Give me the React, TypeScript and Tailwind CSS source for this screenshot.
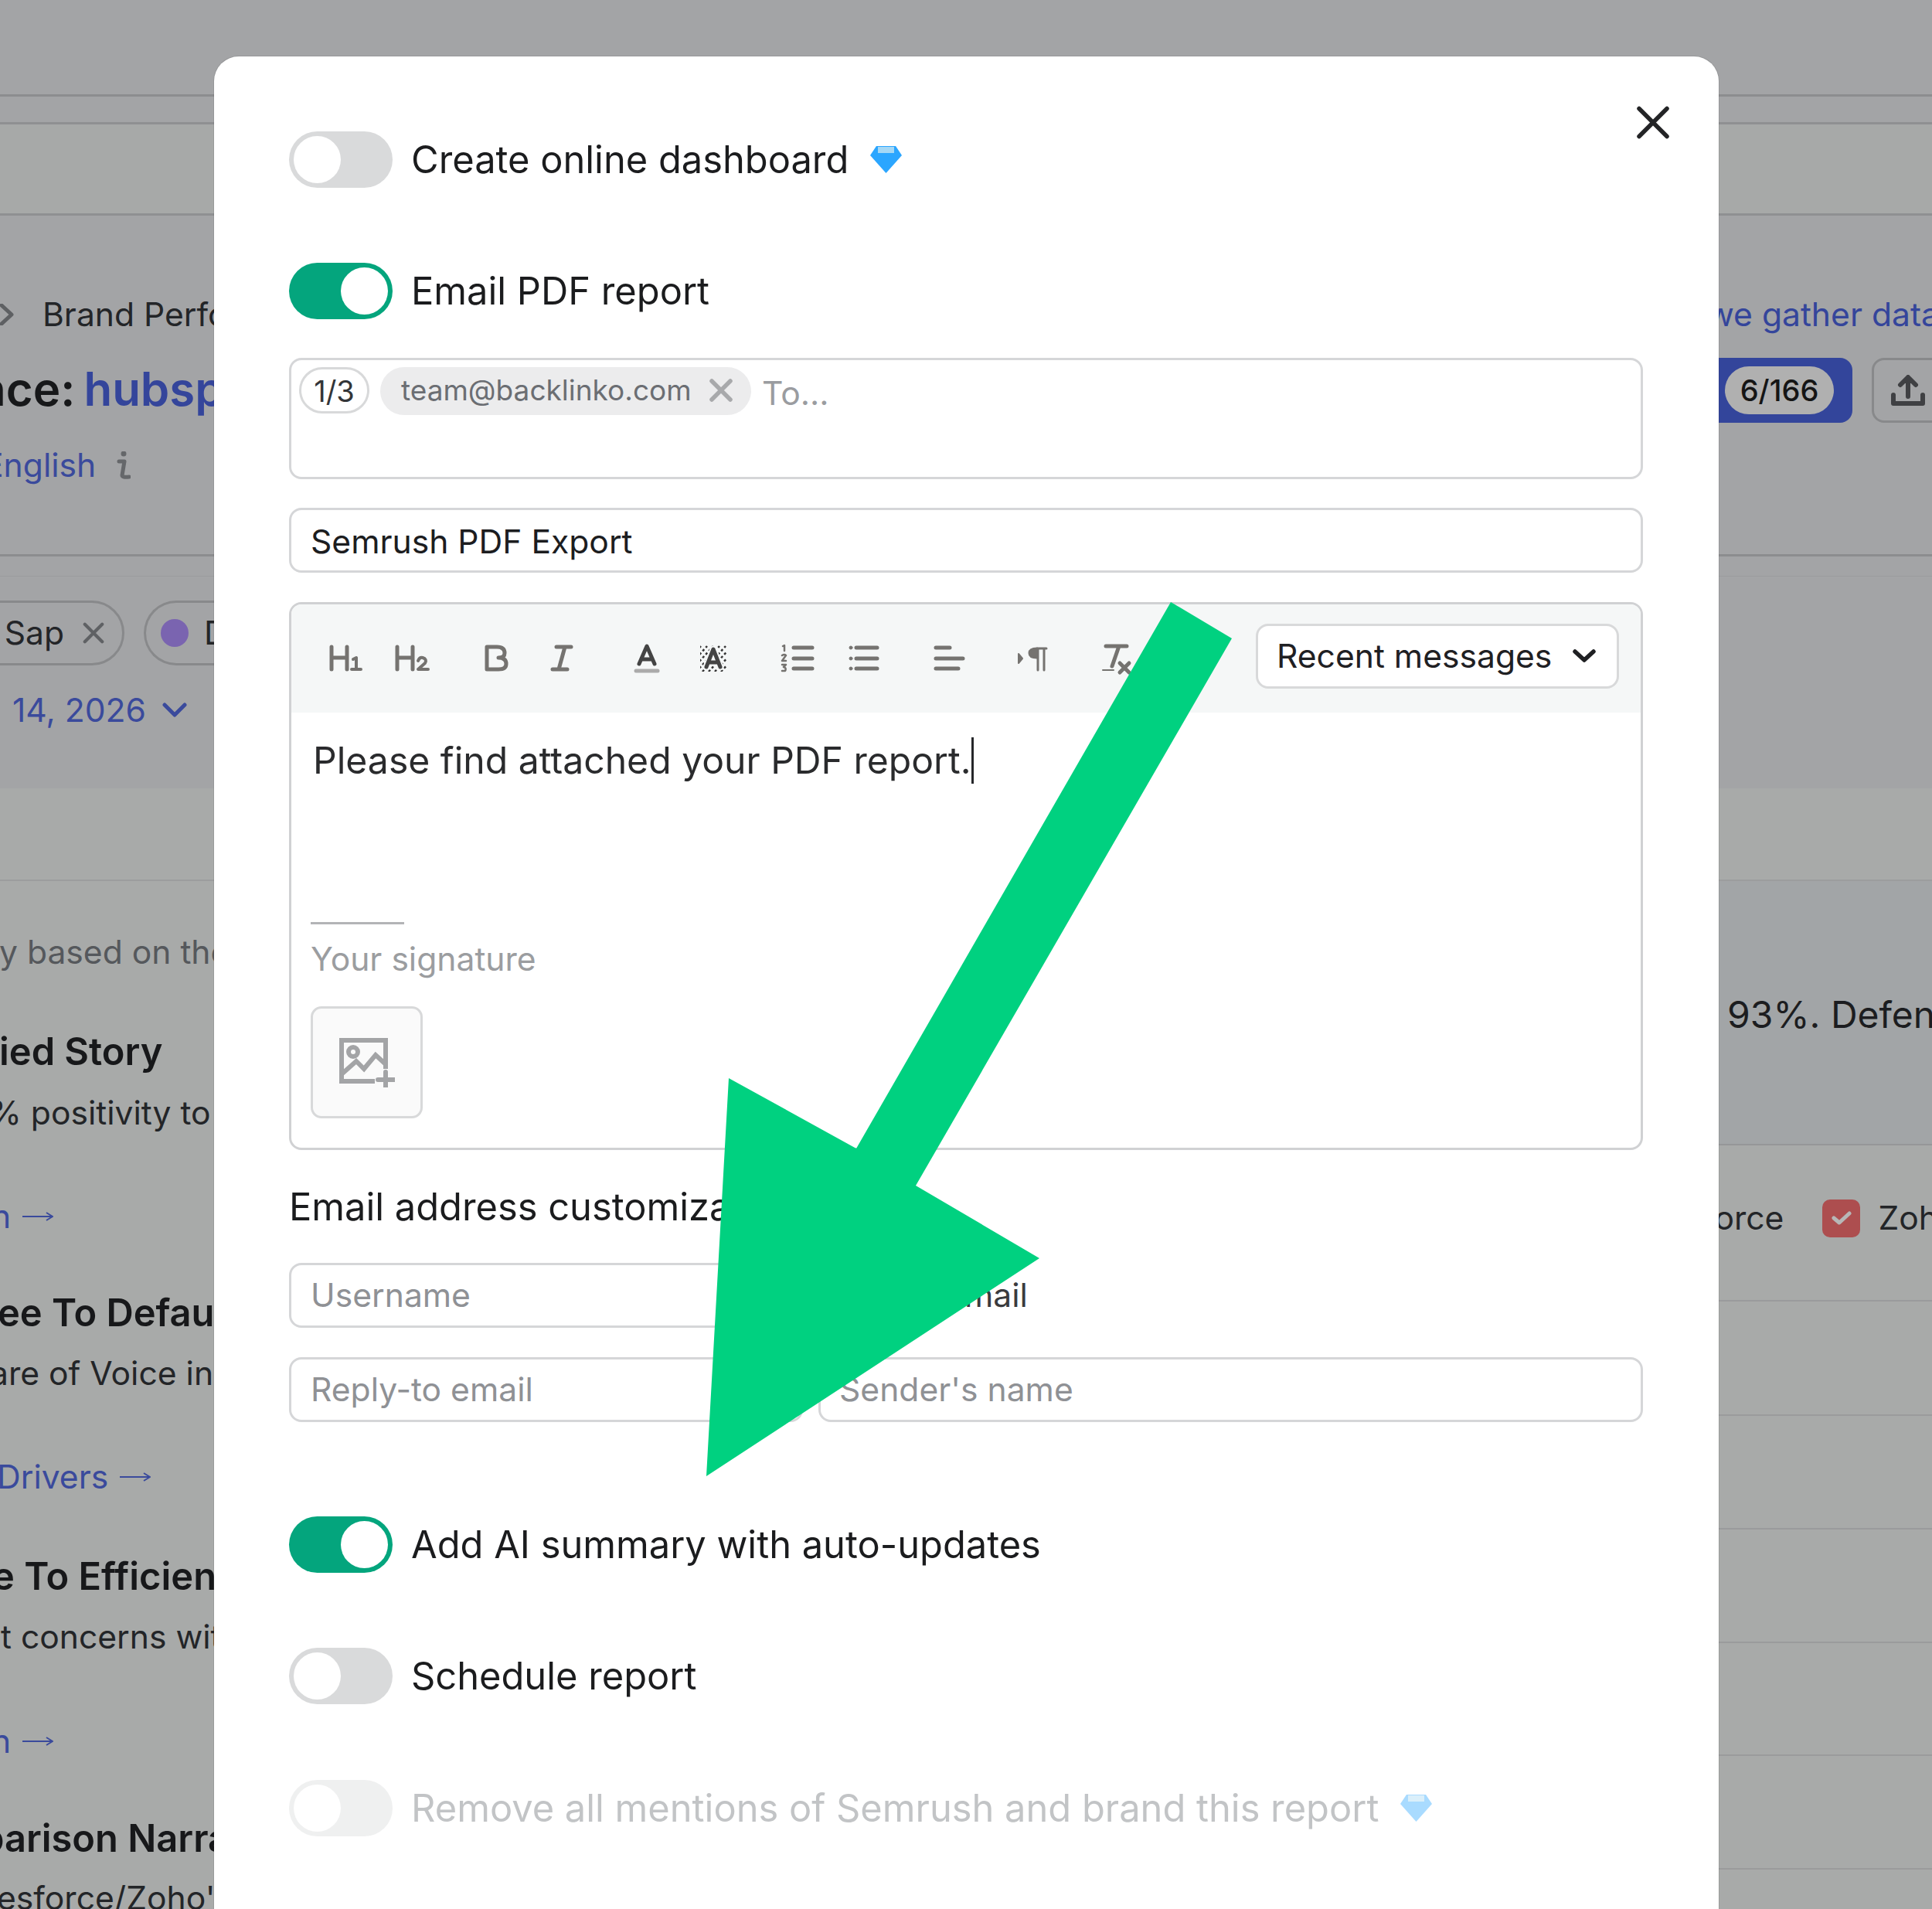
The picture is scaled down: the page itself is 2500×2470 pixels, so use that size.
const Toggle = ({ on, dim }: { on?: boolean; dim?: boolean }) => (
  <div
    className={`flex h-[73px] w-[134px] shrink-0 items-center rounded-full p-[6px] ${on ? "justify-end bg-[#04a57d]" : "bg-[#d9dadb]"} ${dim ? "opacity-40" : ""}`}
  >
    <div className="h-[61px] w-[61px] rounded-full bg-white" />
  </div>
);

const Gem = ({ dim }: { dim?: boolean }) => (
  <svg viewBox="0 0 41 35" className={`h-[35px] w-[41px] ${dim ? "opacity-40" : ""}`}>
    <path d="M8 0H33L41 12L20.5 35L0 12Z" fill="#2ba6ff" />
    <path d="M10 1H31V9H10Z" fill="#a5d8f5" />
  </svg>
);

const Cross = ({ className, color, width }: { className: string; color: string; width: number }) => (
  <svg viewBox="0 0 30 30" className={className} fill="none" stroke={color} strokeWidth={width} strokeLinecap="round">
    <path d="M3 3L27 27M27 3L3 27" />
  </svg>
);

const LinkArrow = () => (
  <svg viewBox="0 0 40 14" className="ml-[15px] inline-block h-[14px] w-[40px]" fill="none" stroke="#3a4a9c" strokeWidth="2">
    <path d="M0 7H38M31 2L39 7L31 12" />
  </svg>
);

const ToolIcon = ({ children }: { children: React.ReactNode }) => (
  <div className="flex w-[86px] justify-center">
    <svg
      viewBox="0 0 48 48"
      className="h-[48px] w-[48px]"
      fill="none"
      stroke="#757370"
      strokeWidth="5"
      strokeLinecap="round"
      strokeLinejoin="round"
    >
      {children}
    </svg>
  </div>
);

const hatch = [-30, -22, -14, -6, 2, 10, 18, 26];

const Toolbar = () => (
  <div className="flex h-[140px] items-center bg-[#f5f7f7] pr-[28px] pl-[27px]">
    <div className="flex gap-[23px]">
      <div className="flex">
        <ToolIcon>
          <path d="M6 9V38M26 9V38M6 23H26" />
          <path d="M34 25L38 23V38M32 38H44" strokeWidth="4" />
        </ToolIcon>
        <ToolIcon>
          <path d="M5 9V38M25 9V38M5 23H25" />
          <path d="M32 27Q34 22 38 23Q44 25 41 30L32 38H45" strokeWidth="4" />
        </ToolIcon>
      </div>
      <div className="flex">
        <ToolIcon>
          <path d="M12 9H25Q35 9 35 17Q35 23 27 23Q37 23 37 31Q37 38 27 38H12Z" />
        </ToolIcon>
        <ToolIcon>
          <path d="M16 9H35M11 38H30M27 9L19 38" />
        </ToolIcon>
      </div>
      <div className="flex">
        <ToolIcon>
          <path d="M14 31L24 8L34 31M17 25H31" stroke="#444444" />
          <path d="M10 40H38" stroke="#ababab" strokeWidth="5" />
        </ToolIcon>
        <ToolIcon>
          <clipPath id="hatch-box">
            <rect x="7" y="7" width="34" height="34" />
          </clipPath>
          <g clipPath="url(#hatch-box)" stroke="#333333" strokeWidth="2.5" strokeDasharray="3 3" strokeLinecap="butt">
            {hatch.map((o) => (
              <path key={o} d={`M${o + 8} 41L${o + 38} 8`} />
            ))}
          </g>
          <path d="M15 35L24 12L33 35M18 29H30" stroke="#f5f7f7" strokeWidth="9" />
          <path d="M15 35L24 12L33 35M18 29H30" stroke="#444444" />
        </ToolIcon>
      </div>
      <div className="flex">
        <ToolIcon>
          <path d="M19 10H43M19 24H43M19 37H43" />
          <path d="M5 8L7 7V14M4 20Q7 18 9 20L4 27H9M4 32H9L6 35Q10 36 8 40H4" strokeWidth="2.5" />
        </ToolIcon>
        <ToolIcon>
          <path d="M14 10H41M14 24H41M14 37H41" />
          <circle cx="7" cy="10" r="2" fill="#757370" strokeWidth="1" />
          <circle cx="7" cy="24" r="2" fill="#757370" strokeWidth="1" />
          <circle cx="7" cy="37" r="2" fill="#757370" strokeWidth="1" />
        </ToolIcon>
      </div>
      <ToolIcon>
        <path d="M8 10H26M8 24H43M8 37H37" />
      </ToolIcon>
      <ToolIcon>
        <path d="M6 18L11 24L6 30Z" fill="#757370" strokeWidth="2" />
        <path d="M30 11H42M31 11V39M39 11V39" strokeWidth="3" />
        <path d="M30 11Q20 11 20 17Q20 23 30 23Z" fill="#757370" strokeWidth="3" />
      </ToolIcon>
      <ToolIcon>
        <path d="M10 8H37M27 8L18 34" />
        <path d="M6 39H20" strokeWidth="2" />
        <path d="M28 30L40 42M40 30L28 42" strokeWidth="5" />
      </ToolIcon>
    </div>
    <div className="-mt-[6px] ml-auto flex h-[84px] w-[470px] items-center justify-between rounded-[16px] border-[3px] border-[#d8d9da] bg-white pr-[27px] pl-[24px] text-[42.6px] text-[#1f2023]">
      <span>Recent messages</span>
      <svg viewBox="0 0 30 18" className="h-[18px] w-[30px]" fill="none" stroke="#1f2023" strokeWidth="5.5" strokeLinecap="round" strokeLinejoin="round">
        <path d="M3 3L15 14L27 3" />
      </svg>
    </div>
  </div>
);

const labelClass = "ml-[24px] pt-[1px] text-[48.8px] leading-[60px] text-[#1b1c1e]";

const Modal = () => (
  <div className="absolute top-[73px] bottom-0 left-[277px] w-[1947px] rounded-t-[32px] bg-white pt-[97px] pr-[98px] pl-[97px] shadow-[0_0_0_1px_rgba(0,0,0,0.08)]">
    <svg viewBox="0 0 42 42" className="absolute top-[64px] right-[64px] h-[43px] w-[42px]" fill="none" stroke="#232426" strokeWidth="5.5" strokeLinecap="round">
      <path d="M3 3L39 39M39 3L3 39" />
    </svg>

    <div className="flex items-center">
      <Toggle />
      <span className={labelClass}>Create online dashboard</span>
      <div className="ml-[28px]">
        <Gem />
      </div>
    </div>

    <div className="mt-[97px] flex items-center">
      <Toggle on />
      <span className={labelClass}>Email PDF report</span>
    </div>

    <div className="mt-[50px] flex h-[157px] items-start gap-[14px] rounded-[16px] border-[3px] border-[#d5d6d8] pt-[9px] pl-[10px]">
      <div className="flex h-[60px] w-[91px] items-center justify-center rounded-full border-[3px] border-[#d8d9da] pt-[2px] text-[38px] text-[#333538]">1/3</div>
      <div className="flex h-[62px] w-[480px] items-center rounded-full bg-[#ececed] pb-[2px] pl-[27px] text-[37px] text-[#6b6e73]">
        <span>team@backlinko.com</span>
        <Cross className="ml-[23px] h-[30px] w-[30px]" color="#a8a9ab" width={5.5} />
      </div>
      <span className="pt-[2px] text-[42.6px] leading-[64px] text-[#9a9ca0]">To...</span>
    </div>

    <div className="mt-[37px] flex h-[84px] items-center rounded-[16px] border-[3px] border-[#d5d6d8] pt-[3px] pl-[25px] text-[42.6px] text-[#1c1d1f]">Semrush PDF Export</div>

    <div className="mt-[38px] overflow-hidden rounded-[16px] border-[3px] border-[#d0d1d3]">
      <Toolbar />
      <div className="pt-[32px] pr-[24px] pb-[38px] pl-[25px]">
        <div className="flex h-[60px] items-center pl-[3px] text-[48.1px] text-[#2a2b2d]">
          <span>Please find attached your PDF report.</span>
          <div className="h-[60px] w-[3px] bg-[#26272a]" />
        </div>
        <div className="mt-[179px] h-[3px] w-[121px] bg-[#b3b4b6]" />
        <div className="mt-[17px] text-[42.6px] leading-[56px] text-[#9b9da0]">Your signature</div>
        <div className="mt-[33px] flex h-[145px] w-[145px] items-center justify-center rounded-[14px] border-[3px] border-[#d8d9da] bg-[#fafafa]">
          <svg viewBox="0 0 72 64" className="h-[64px] w-[72px]" fill="none" stroke="#a3a4a6" strokeWidth="6">
            <path d="M46 56H3V3H60V40" />
            <circle cx="18" cy="18" r="6" />
            <path d="M4 46L22 30L32 40L47 22L60 34" />
            <path d="M60 44V64M50 54H72" strokeLinecap="round" />
          </svg>
        </div>
      </div>
    </div>

    <div className="mt-[44px] text-[48.8px] leading-[60px] text-[#1b1c1e]">Email address customization</div>
    <div className="mt-[42px] flex gap-[20px]">
      <div className="flex h-[84px] w-[665px] items-center rounded-[16px] border-[3px] border-[#d5d6d8] pl-[25px] text-[42.6px] text-[#8f9195]">Username</div>
      <div className="flex h-[84px] flex-1 items-center pl-[123px] text-[42.6px] text-[#3a3b3d]">@email</div>
    </div>
    <div className="mt-[38px] flex gap-[20px]">
      <div className="flex h-[84px] w-[665px] items-center rounded-[16px] border-[3px] border-[#d5d6d8] pl-[25px] text-[42.6px] text-[#8f9195]">Reply-to email</div>
      <div className="flex h-[84px] flex-1 items-center rounded-[16px] border-[3px] border-[#d5d6d8] pl-[24px] text-[42.6px] text-[#8f9195]">Sender's name</div>
    </div>

    <div className="mt-[122px] flex items-center">
      <Toggle on />
      <span className={labelClass}>Add AI summary with auto-updates</span>
    </div>
    <div className="mt-[97px] flex items-center">
      <Toggle />
      <span className={labelClass}>Schedule report</span>
    </div>
    <div className="mt-[98px] flex items-center">
      <Toggle dim />
      <span className="ml-[24px] pt-[1px] text-[48.8px] leading-[60px] text-[#c2c4c6]">Remove all mentions of Semrush and brand this report</span>
      <div className="ml-[28px]">
        <Gem dim />
      </div>
    </div>
  </div>
);

const insights = [
  { text: "y based on the", kind: "muted", mt: "mt-[64px]", ml: "-ml-[1px]" },
  { text: "ied Story", kind: "head", mt: "mt-[73px]", ml: "-ml-[1px]" },
  { text: "% positivity to", kind: "body", mt: "mt-[23px]", ml: "-ml-[14px]" },
  { text: "n", kind: "link", mt: "mt-[78px]", ml: "-ml-[11px]" },
  { text: "ee To Default", kind: "head", mt: "mt-[69px]", ml: "-ml-[3px]" },
  { text: "are of Voice in", kind: "body", mt: "mt-[22px]", ml: "-ml-[13px]" },
  { text: "Drivers", kind: "link", mt: "mt-[78px]", ml: "-ml-[4px]" },
  { text: "e To Efficiency", kind: "head", mt: "mt-[73px]", ml: "-ml-[10px]" },
  { text: "t concerns with", kind: "body", mt: "mt-[22px]", ml: "ml-[1px]" },
  { text: "n", kind: "link", mt: "mt-[79px]", ml: "-ml-[11px]" },
  { text: "parison Narrative", kind: "head", mt: "mt-[70px]", ml: "-ml-[25px]" },
  { text: "esforce/Zoho's", kind: "body", mt: "mt-[21px]", ml: "-ml-[4px]" },
];

const kindClass: Record<string, string> = {
  muted: "text-[42.6px] text-[#55585c]",
  head: "text-[48.8px] font-semibold text-[#17181a]",
  body: "text-[42.6px] text-[#232528]",
  link: "text-[42.6px] text-[#3a4a9c]",
};

const Page = () => (
  <div className="flex h-full flex-col">
    <div className="h-[125px] shrink-0 border-b-[3px] border-[#8c8d8f] bg-[#a3a4a6]" />
    <div className="h-[36px] shrink-0 border-b-[3px] border-[#8f9092] bg-[#a3a4a6]" />
    <div className="h-[118px] shrink-0 border-b-[3px] border-[#8f9092] bg-[#a7a9a8]" />

    <div className="relative flex h-[441px] shrink-0 border-b-[3px] border-[#8c8d8f] bg-[#a3a4a6]">
      <div className="w-[1000px] pt-[100px]">
        <div className="flex h-[56px] items-center text-[42.6px] text-[#232528]">
          <svg viewBox="0 0 18 28" className="h-[28px] w-[18px]" fill="none" stroke="#5e6063" strokeWidth="5" strokeLinecap="round" strokeLinejoin="round">
            <path d="M2 2L15 14L2 26" />
          </svg>
          <span className="ml-[37px]">Brand Performance</span>
        </div>
        <div className="-ml-[29px] mt-[26px] flex h-[84px] items-center text-[60px] font-semibold whitespace-nowrap text-[#17181a]">
          nce:&nbsp;<span className="-ml-[4px] text-[#34459b]">hubspot</span>
        </div>
        <div className="-ml-[21px] mt-[29px] flex h-[56px] items-center text-[42.6px] text-[#3a4a9c]">
          English
          <svg viewBox="0 0 18 36" className="ml-[27px] h-[36px] w-[18px]" fill="none" stroke="#65676a" strokeWidth="5" strokeLinecap="round" strokeLinejoin="round">
            <circle cx="9" cy="3" r="2" fill="#65676a" strokeWidth="3" />
            <path d="M3 13H10L7 31Q7 34 16 33" />
          </svg>
        </div>
      </div>
      <div className="ml-auto w-[500px] overflow-hidden pt-[100px]">
        <div className="h-[56px] pl-[209px] text-[42.6px] leading-[56px] whitespace-nowrap text-[#34459b]">we gather data</div>
        <div className="mt-[28px] flex w-[600px]">
          <div className="flex h-[84px] w-[397px] items-center justify-end rounded-[16px] bg-[#33459b] pr-[24px]">
            <div className="flex h-[62px] w-[141px] items-center justify-center rounded-full bg-[#b0b0b0] text-[38px] font-medium text-[#151515]">6/166</div>
          </div>
          <div className="ml-[25px] flex h-[84px] w-[120px] items-center rounded-[16px] border-[3px] border-[#88898b] pl-[22px]">
            <svg viewBox="0 0 44 40" className="h-[40px] w-[44px]" fill="none" stroke="#3f4043" strokeWidth="6" strokeLinecap="round" strokeLinejoin="round">
              <path d="M3 26V37H41V26M22 28V4M12 13L22 3L32 13" />
            </svg>
          </div>
        </div>
      </div>
    </div>

    <div className="h-[26px] shrink-0 border-b-[1px] border-[#9a9b9d] bg-[#a3a4a6]" />
    <div className="h-[274px] shrink-0 overflow-hidden bg-[#a3a4a6] pt-[31px]">
      <div className="flex items-center text-[42.6px] text-[#232528]">
        <div className="-ml-[40px] flex h-[84px] w-[201px] items-center justify-end rounded-full border-[3px] border-[#88898b] pr-[23px]">
          <span>Sap</span>
          <Cross className="ml-[24px] h-[28px] w-[28px]" color="#5f6164" width={4.5} />
        </div>
        <div className="ml-[25px] flex h-[84px] w-[200px] items-center rounded-l-full border-[3px] border-r-0 border-[#88898b] pl-[19px]">
          <div className="h-[36px] w-[36px] rounded-full bg-[#7a64b0]" />
          <span className="ml-[20px]">Data</span>
        </div>
      </div>
      <div className="mt-[30px] flex h-[56px] items-center pl-[16px] text-[42.6px] text-[#3a4a9c]">
        14, 2026
        <svg viewBox="0 0 32 20" className="ml-[21px] h-[20px] w-[32px]" fill="none" stroke="#3a4a9c" strokeWidth="5" strokeLinecap="round" strokeLinejoin="round">
          <path d="M3 3L16 16L29 3" />
        </svg>
      </div>
    </div>

    <div className="h-[120px] shrink-0 border-b-[2px] border-[#9c9d9e] bg-[#a8aaa9]" />

    <div className="flex flex-1 bg-[#a8aaa9]">
      <div className="w-[1000px] overflow-hidden">
        {insights.map((row, i) => (
          <div key={i} className={`flex h-[56px] items-center whitespace-nowrap ${row.mt} ${row.ml} ${kindClass[row.kind]}`}>
            {row.text}
            {row.kind === "link" && <LinkArrow />}
          </div>
        ))}
      </div>
      <div className="ml-auto flex w-[500px] flex-col overflow-hidden">
        <div className="h-[342px] shrink-0 border-b-[2px] border-[#959698] bg-[#a2a5a7] pt-[143px] pl-[235px] text-[48px] leading-[60px] whitespace-nowrap text-[#1c1d20]">
          93%. Defending
        </div>
        <div className="flex h-[202px] shrink-0 items-start overflow-hidden border-b-[2px] border-[#9a9b9c] pt-[69px] pl-[95px] text-[42.6px] whitespace-nowrap text-[#232528]">
          <div className="flex h-[50px] items-center">
            Salesforce
            <div className="ml-[50px] flex h-[49px] w-[49px] shrink-0 items-center justify-center rounded-[10px] bg-[#ad4e4f]">
              <svg viewBox="0 0 26 20" className="h-[20px] w-[26px]" fill="none" stroke="#b7b7b7" strokeWidth="5" strokeLinecap="round" strokeLinejoin="round">
                <path d="M3 10L10 16L23 4" />
              </svg>
            </div>
            <span className="ml-[23px]">Zoho</span>
          </div>
        </div>
        {[148, 147, 147, 146, 147].map((h, i) => (
          <div key={i} style={{ height: h }} className="shrink-0 border-b-[2px] border-[#9a9b9c]" />
        ))}
      </div>
    </div>
  </div>
);

export default function App() {
  return (
    <div className="relative h-[2470px] w-[2500px] overflow-hidden font-['Inter',sans-serif]">
      <Page />
      <Modal />
      <svg viewBox="0 0 2500 2470" className="absolute inset-0 h-[2470px] w-[2500px]">
        <polygon points="1515,779 1594,826 1185,1534 1345,1628 914,1910 943,1395 1108,1486" fill="#00d180" />
      </svg>
    </div>
  );
}
